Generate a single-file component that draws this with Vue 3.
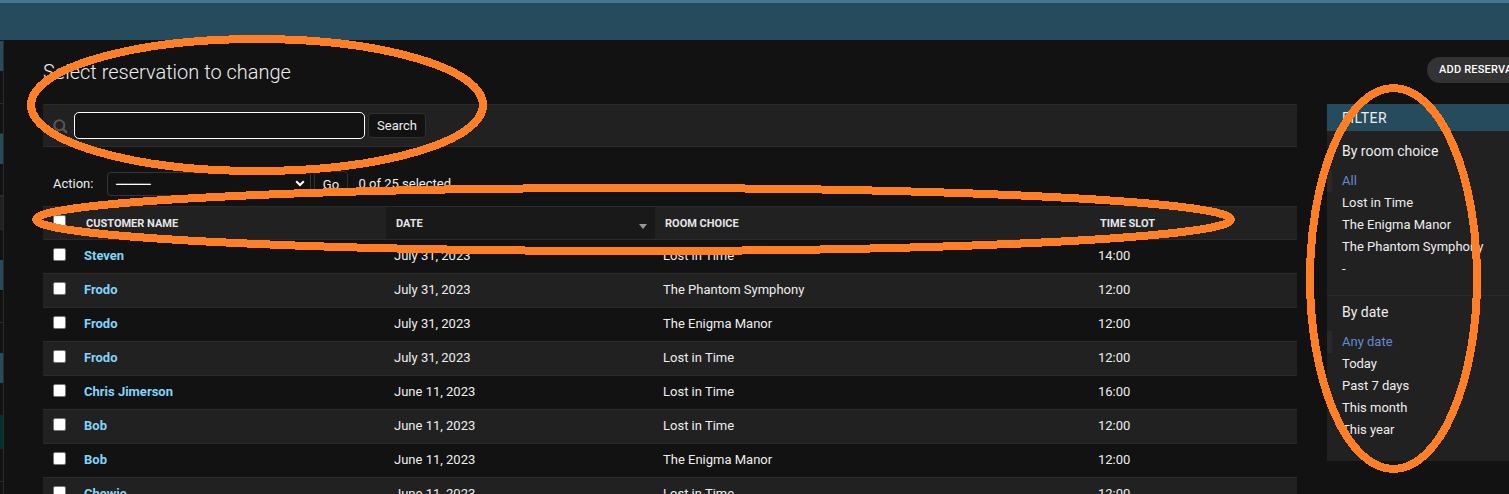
<script setup>
const rail = [
  { kind: 'caption', size: 30 }, { kind: 'row', size: 33 }, { kind: 'row', size: 30 },
  { kind: 'caption', size: 30 }, { kind: 'row', size: 32 }, { kind: 'alt', size: 34 },
  { kind: 'gap', size: 30 }, { kind: 'caption', size: 30 }, { kind: 'row', size: 33 },
  { kind: 'gap', size: 30 }, { kind: 'caption', size: 30 }, { kind: 'gap', size: 32 },
  { kind: 'current', size: 34 }, { kind: 'row', size: 33 }, { kind: 'gap', size: 20 },
]
const rows = [
  ['Steven', 'July 31, 2023', 'Lost in Time', '14:00'],
  ['Frodo', 'July 31, 2023', 'The Phantom Symphony', '12:00'],
  ['Frodo', 'July 31, 2023', 'The Enigma Manor', '12:00'],
  ['Frodo', 'July 31, 2023', 'Lost in Time', '12:00'],
  ['Chris Jimerson', 'June 11, 2023', 'Lost in Time', '16:00'],
  ['Bob', 'June 11, 2023', 'Lost in Time', '12:00'],
  ['Bob', 'June 11, 2023', 'The Enigma Manor', '12:00'],
  ['Chewie', 'June 11, 2023', 'Lost in Time', '12:00'],
]
const filters = [
  { title: 'By room choice', items: ['All', 'Lost in Time', 'The Enigma Manor', 'The Phantom Symphony', '-'] },
  { title: 'By date', items: ['Any date', 'Today', 'Past 7 days', 'This month', 'This year'] },
]
</script>

<template>
  <div class="page">
    <header class="top"></header>
    <div class="body">
      <nav class="rail">
        <div v-for="(r, i) in rail" :key="i" :class="r.kind" :style="{ height: r.size + 'px' }"></div>
      </nav>
      <main class="main">
        <div class="heading">
          <h1>Select reservation to change</h1>
          <a class="add">ADD RESERVATION</a>
        </div>
        <div class="columns">
          <section class="list">
            <div class="toolbar">
              <svg class="glass" width="15" height="15" viewBox="0 0 15 15">
                <circle cx="6.3" cy="6.3" r="5" fill="none" stroke="#555" stroke-width="2.1" />
                <path d="M9.9 9.9 13.2 13.2" stroke="#555" stroke-width="2.5" stroke-linecap="round" />
              </svg>
              <input class="query" type="text" />
              <button class="btn search">Search</button>
            </div>
            <div class="actions">
              <span class="label">Action:</span>
              <div class="select">
                <span class="dash">---------</span>
                <svg width="10" height="7" viewBox="0 0 10 7"><path d="M1.2 1.2 5 5 8.8 1.2" fill="none" stroke="#fff" stroke-width="2" /></svg>
              </div>
              <button class="btn go">Go</button>
              <span class="count">0 of 25 selected</span>
            </div>
            <div class="table">
              <div class="tr th">
                <span class="pick"><i class="box"></i></span>
                <span>CUSTOMER NAME</span>
                <span class="sorted">DATE<i class="arrow"></i></span>
                <span>ROOM CHOICE</span>
                <span>TIME SLOT</span>
              </div>
              <div v-for="(r, i) in rows" :key="i" class="tr td">
                <span class="pick"><i class="box"></i></span>
                <a class="name">{{ r[0] }}</a>
                <span>{{ r[1] }}</span>
                <span>{{ r[2] }}</span>
                <span>{{ r[3] }}</span>
              </div>
            </div>
          </section>
          <aside class="filter">
            <h2>FILTER</h2>
            <div v-for="f in filters" :key="f.title" class="group">
              <h3>{{ f.title }}</h3>
              <ul>
                <li v-for="(t, i) in f.items" :key="t" :class="{ selected: i === 0 }">{{ t }}</li>
              </ul>
            </div>
          </aside>
        </div>
      </main>
    </div>
    <svg class="marks" width="1509" height="494" viewBox="0 0 1509 494" fill="none" stroke="#ff7f27" stroke-width="8" shape-rendering="crispEdges">
      <ellipse cx="257" cy="105" rx="226" ry="66" />
      <ellipse cx="633.5" cy="219.5" rx="597.5" ry="31.5" />
      <ellipse cx="1393.5" cy="278.5" rx="83.5" ry="190.5" />
    </svg>
  </div>
</template>

<style>
body { background: #121212; overflow: hidden; }
</style>

<style scoped>
* { box-sizing: border-box; }
.page {
  position: relative; width: 1509px; height: 494px; overflow: hidden;
  background: #121212; color: #eee; font-family: Roboto, sans-serif; font-size: 13px;
  display: flex; flex-direction: column;
}
.top { height: 40px; flex: none; background: #264b5d; border-top: 3px solid #417690; }
.body { display: flex; flex: 1; min-height: 0; }
.rail { width: 4px; flex: none; padding-top: 1px; border-right: 1px solid #2b2b2b; }
.caption { background: #264b5d; }
.row { border-bottom: 1px solid #2b2b2b; }
.alt { background: #212121; border-top: 1px solid #2b2b2b; border-bottom: 1px solid #2b2b2b; }
.current { background: #033034; }
.main { flex: 1; padding-left: 39px; min-width: 0; }
.heading { height: 64px; display: flex; }
h1 { margin: 20px 0 0; width: 1384px; flex: none; font-size: 20px; font-weight: 300; line-height: 24px; color: #eee; }
.add {
  flex: none; height: 26px; margin-top: 17px; padding: 0 12px; border-radius: 15px;
  background: #333; color: #fff; font-size: 11px; font-weight: 500; line-height: 25px; letter-spacing: .2px; white-space: nowrap;
}
.columns { display: flex; gap: 30px; }
.list { width: 1254px; flex: none; }
.toolbar {
  height: 43px; display: flex; align-items: center; padding-left: 10px;
  background: #212121; border-top: 1px solid #2b2b2b; border-bottom: 1px solid #2b2b2b;
}
.glass { flex: none; margin-top: 2px; }
.query { width: 291px; height: 27px; margin-left: 6px; background: #121212; border: 1px solid #fff; border-radius: 5px; outline: none; }
.btn { background: #121212; border: 1px solid #2f2f2f; border-radius: 4px; color: #eee; font: 13px Roboto, sans-serif; padding: 0; }
.search { width: 58px; height: 25px; margin-left: 3px; }
.actions { display: flex; align-items: center; height: 59px; padding: 14px 0 0 10px; line-height: 16px; }
.label { width: 54px; }
.select {
  width: 204px; height: 24px; border: 1px solid #353535; border-radius: 4px;
  display: flex; align-items: center; justify-content: space-between; padding: 0 5px 0 8px;
}
.dash { display: inline-block; transform: scaleX(1.19); transform-origin: 0 50%; letter-spacing: -.4px; color: #fff; -webkit-text-stroke: .3px #fff; }
.go { width: 34px; height: 25px; margin-left: 3px; padding-top: 1px; }
.count { margin-left: 10.5px; }
.tr { display: grid; grid-template-columns: 33px 310px 269px 435px 1fr; height: 34px; }
.th {
  background: #212121; border-top: 1px solid #2b2b2b; border-bottom: 1px solid #2b2b2b;
  font-size: 11px; font-weight: 700; line-height: 34px; color: #e6e6e6;
}
.th > span { padding-left: 10px; height: 32px; }
.th .sorted { background: #191919; display: flex; align-items: flex-start; justify-content: space-between; padding-right: 8px; }
.arrow { margin-top: 17px; border: 4.5px solid transparent; border-top: 5px solid #999; border-bottom: 0; }
.td { line-height: 32px; border-bottom: 1px solid #2b2b2b; }
.td:nth-child(odd) { background: #212121; }
.td > * { padding-left: 8px; }
.td .pick, .th .pick { padding-left: 10px; display: flex; padding-top: 8px; }
.box { width: 13px; height: 13px; background: #fff; border: 1px solid #767676; border-radius: 2px; }
.name { color: #81d4fa; font-weight: 700; }
.filter { width: 240px; flex: none; height: 357px; background: #212121; }
h2 { margin: 0; padding-left: 15px; height: 27px; line-height: 28px; font-size: 14px; font-weight: 400; letter-spacing: .5px; background: #264b5d; }
.group { height: 165px; padding-top: 12px; }
.group + .group { border-top: 1px solid #2b2b2b; padding-top: 8px; margin-top: -1px; }
h3 { margin: 0 0 10px; padding-left: 15px; font-size: 14px; font-weight: 400; line-height: 17px; }
ul { list-style: none; margin: 0; padding: 0; }
li { height: 22px; line-height: 22px; padding-left: 10px; border-left: 5px solid transparent; white-space: nowrap; }
li.selected { border-left-color: #292929; color: #648bd4; }
.marks { position: absolute; left: 0; top: 0; }
</style>
